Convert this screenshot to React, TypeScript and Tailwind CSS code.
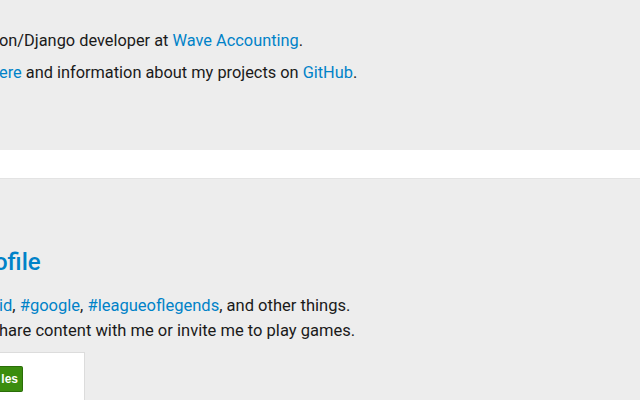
export default function App() {
  return (
    <div className="w-[640px] h-[400px] overflow-hidden bg-[#ededed] text-[#1a1a1a] font-['Roboto',sans-serif]">
      {/* about section */}
      <section className="h-[150px] pt-[29px] text-[16.35px] leading-[24px]">
        <p className="mb-[8px] -ml-[1px]">
          on/Django developer at{" "}
          <a className="text-[#0082c8]">Wave Accounting</a>.
        </p>
        <p className="-ml-[1px]">
          <a className="text-[#0082c8]">ere</a> and information about my projects on{" "}
          <a className="text-[#0082c8]">GitHub</a>.
        </p>
      </section>

      <div className="h-[29px] bg-white border-b border-[#e3e3e3]" />

      {/* google+ section */}
      <section className="pt-[67px]">
        <h2 className="text-[24px] leading-[32px] font-medium text-[#0082c8] -ml-[6px]">ofile</h2>
        <div className="mt-[15px] text-[16.55px] leading-[25px]">
          <p className="-ml-[1px]">
            <a className="text-[#0082c8]">id</a>,{" "}
            <a className="text-[#0082c8]">#google</a>,{" "}
            <a className="text-[#0082c8]">#leagueoflegends</a>, and other things.
          </p>
          <p className="-ml-[1px]">hare content with me or invite me to play games.</p>
        </div>
        <div className="mt-[9px] w-[85px] h-[60px] bg-white border border-l-0 border-[#dcdcdc] pt-[13px]">
          <button className="h-[26px] w-[23px] bg-[#3b8d0e] border border-l-0 border-[#2a6e08] rounded-r-[2px] text-white text-[12px] font-bold font-['Liberation_Sans',sans-serif] flex items-center justify-end pr-[4px] overflow-hidden whitespace-nowrap">
            les
          </button>
        </div>
      </section>
    </div>
  );
}
